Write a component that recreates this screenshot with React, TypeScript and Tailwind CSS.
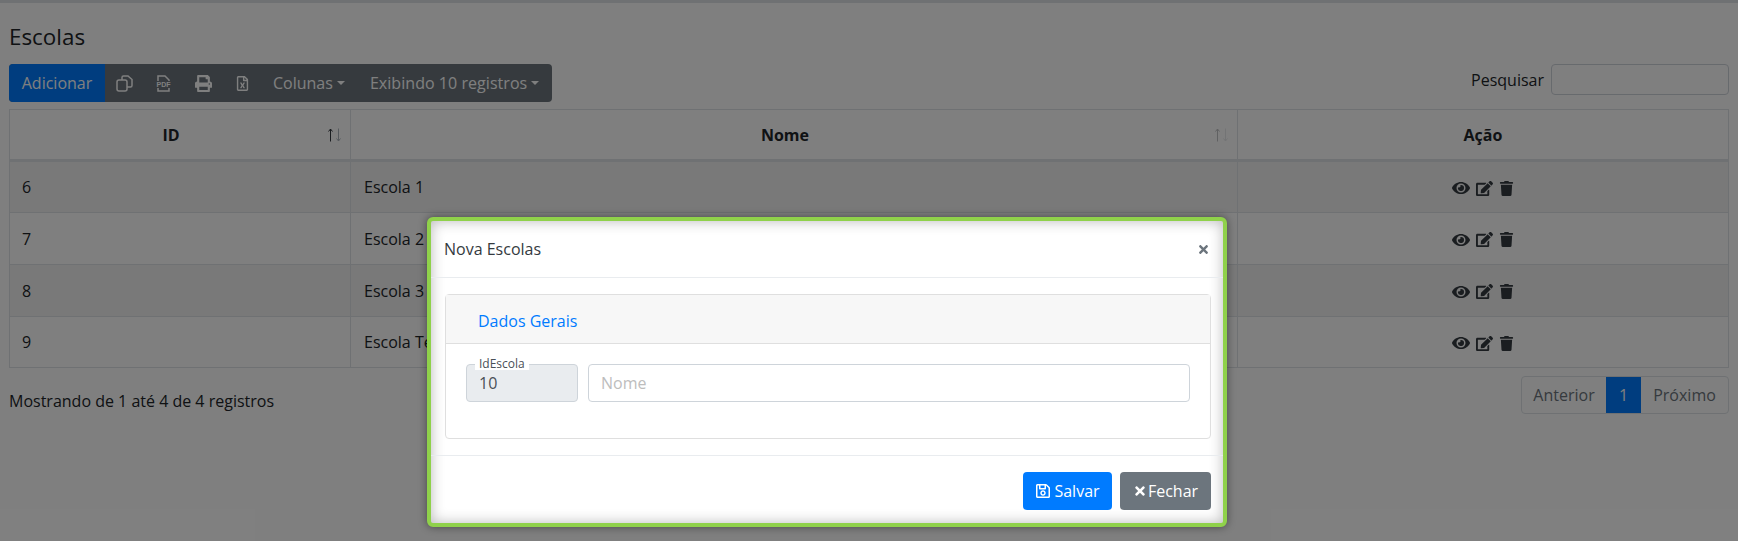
import { FaEdit, FaEye, FaPrint, FaRegFileExcel, FaRegSave, FaTimes, FaTrash } from 'react-icons/fa';

const rows = [
  { id: 6, nome: 'Escola 1', h: 'h-[52px]' },
  { id: 7, nome: 'Escola 2', h: 'h-[52px]' },
  { id: 8, nome: 'Escola 3', h: 'h-[52px]' },
  { id: 9, nome: 'Escola Teste', h: 'h-[51px]' },
];

function CopyIcon() {
  return (
    <svg width="17" height="17" viewBox="0 0 17 17" fill="none" stroke="currentColor" strokeWidth="1.5">
      <path d="M6 5V2.500A1.500 1.500 0 0 1 7.500 1H12l4 3.500V10.500A1.500 1.500 0 0 1 14.500 12H11" />
      <rect x="1" y="5" width="10" height="11" rx="2" />
    </svg>
  );
}

/** File outline broken by a small "PDF" tag, as on the export button. */
function PdfIcon() {
  return (
    <svg width="15" height="17" viewBox="0 0 15 17" fill="none" stroke="currentColor" strokeWidth="1.5">
      <path d="M2 6V1h7l4 4v1M2 13v3h11v-3" />
      <text x="7.500" y="12" textAnchor="middle" fontSize="7" fontWeight="700" fill="currentColor" stroke="none" fontFamily="Liberation Sans, sans-serif">
        PDF
      </text>
    </svg>
  );
}

function SortArrows({ dim }: { dim?: boolean }) {
  return (
    <svg
      width="13"
      height="14"
      viewBox="0 0 13 14"
      fill="none"
      className={`absolute right-[9px] top-[18px] ${dim ? 'opacity-30' : ''}`}
    >
      <path d="M2.500 13.500V1M0.500 3.500l2-2.500 2 2.500" stroke="#343a40" />
      <path d="M10.500 0.500V13M8.500 10.500l2 2.500 2-2.500" stroke="#adb5bd" />
    </svg>
  );
}

export default function App() {
  return (
    <div className="relative h-[541px] w-[1738px] overflow-hidden bg-white font-['Open_Sans',sans-serif] text-[16px] text-[#212529]">
      <div className="h-[3px] bg-[#dee2e6]" />
      <div className="px-[9px] pt-[19px]">
        <h1 className="text-[22.4px] leading-[30px] font-normal">Escolas</h1>
        <div className="mt-[12px] flex items-start justify-between">
          <div className="flex h-[38px] overflow-hidden rounded-[4px] bg-[#6c757d] text-white">
            <button className="w-[96px] bg-[#007bff]">Adicionar</button>
            <div className="flex w-[39px] items-center justify-center"><CopyIcon /></div>
            <div className="flex w-[39px] items-center justify-center"><PdfIcon /></div>
            <div className="flex w-[40px] items-center justify-center"><FaPrint size={17} /></div>
            <div className="flex w-[38px] items-center justify-center"><FaRegFileExcel size={15} /></div>
            <button className="flex items-center pl-[12px] pr-[13px]">
              Colunas<span className="ml-[4px] border-x-[4px] border-t-[4px] border-x-transparent border-t-white" />
            </button>
            <button className="flex items-center pl-[12px] pr-[13px] tracking-[0.05px]">
              Exibindo 10 registros<span className="ml-[4px] border-x-[4px] border-t-[4px] border-x-transparent border-t-white" />
            </button>
          </div>
          <div className="flex items-center">
            <span className="mr-[7px]">Pesquisar</span>
            <input className="h-[31px] w-[178px] rounded-[4px] border border-[#ced4da] bg-white" />
          </div>
        </div>

        <table className="mt-[7px] w-[1720px] table-fixed border-collapse border border-[#dee2e6]">
          <colgroup>
            <col className="w-[341px]" />
            <col className="w-[887px]" />
            <col />
          </colgroup>
          <thead>
            <tr className="h-[51px] text-center font-bold">
              <th className="relative border border-b-[3px] border-[#dee2e6] pr-[18px]">ID<SortArrows /></th>
              <th className="relative border border-b-[3px] border-[#dee2e6] pr-[18px]">Nome<SortArrows dim /></th>
              <th className="border border-b-[3px] border-[#dee2e6]">Ação</th>
            </tr>
          </thead>
          <tbody>
            {rows.map((r, i) => (
              <tr key={r.id} className={`${r.h} ${i % 2 === 0 ? 'bg-[#f2f2f2]' : 'bg-white'}`}>
                <td className="border border-[#dee2e6] px-[12px]">{r.id}</td>
                <td className="border border-[#dee2e6] pl-[13px] pr-[12px]">{r.nome}</td>
                <td className="border border-[#dee2e6]">
                  <div className="flex translate-y-px items-center justify-center gap-[6px] text-[#343a40]">
                    <FaEye size={18} />
                    <FaEdit size={17} />
                    <FaTrash size={15} />
                  </div>
                </td>
              </tr>
            ))}
          </tbody>
        </table>

        <div className="mt-[8px] flex items-start justify-between">
          <span className="mt-[13px]">Mostrando de 1 até 4 de 4 registros</span>
          <div className="flex h-[38px] overflow-hidden rounded-[4px] border border-[#dee2e6] text-[#6c757d]">
            <span className="flex w-[84px] items-center justify-center">Anterior</span>
            <span className="flex w-[35px] items-center justify-center bg-[#007bff] text-white">1</span>
            <span className="flex w-[87px] items-center justify-center">Próximo</span>
          </div>
        </div>
      </div>

      {/* backdrop */}
      <div className="absolute inset-0 bg-black/50" />

      {/* modal */}
      <div className="absolute left-[427px] top-[217px] w-[800px] rounded-[6px] border-4 border-[#8fd14a] bg-white shadow-[0_0_8px_rgba(0,0,0,0.45)]">
        <div className="rounded-[2px] shadow-[inset_0_0_14px_rgba(0,0,0,0.28)]">
          <div className="flex h-[57px] items-center justify-between border-b border-[#e9ecef] pl-[13px] pr-[13px]">
            <span className="text-[#343a40]">Nova Escolas</span>
            <FaTimes size={13} className="text-[#6c757d]" />
          </div>
          <div className="pl-[14px] pr-[12px] pt-[16px] pb-[16px]">
            <div className="h-[145px] rounded-[4px] border border-[#dfdfdf]">
              <div className="flex h-[49px] items-center border-b border-[#dfdfdf] bg-[#f7f7f7] pl-[32px] pt-[3px] text-[#007bff]">
                Dados Gerais
              </div>
              <div className="flex gap-[10px] px-[20px] pt-[20px]">
                <div className="relative h-[38px] w-[112px] rounded-[4px] border border-[#ced4da] bg-[#e9ecef] pl-[12px] leading-[36px] text-[#495057]">
                  10
                  <span className="absolute left-[8px] -top-[7px] bg-white px-[4px] text-[12px] leading-[12px] text-[#495057]">IdEscola</span>
                </div>
                <input
                  placeholder="Nome"
                  className="h-[38px] flex-1 rounded-[4px] border border-[#ced4da] px-[12px] text-[16px] outline-none placeholder:text-[#bdbdbd]"
                />
              </div>
            </div>
          </div>
          <div className="flex h-[68px] items-start justify-end gap-[8px] border-t border-[#e9ecef] pr-[12px] pt-[16px]">
            <button className="flex h-[38px] w-[89px] items-center justify-center gap-[3px] rounded-[4px] bg-[#007bff] text-white">
              <FaRegSave size={16} />Salvar
            </button>
            <button className="flex h-[38px] w-[91px] items-center justify-center gap-[1px] rounded-[4px] bg-[#6c757d] text-white">
              <FaTimes size={14} />Fechar
            </button>
          </div>
        </div>
      </div>
    </div>
  );
}
